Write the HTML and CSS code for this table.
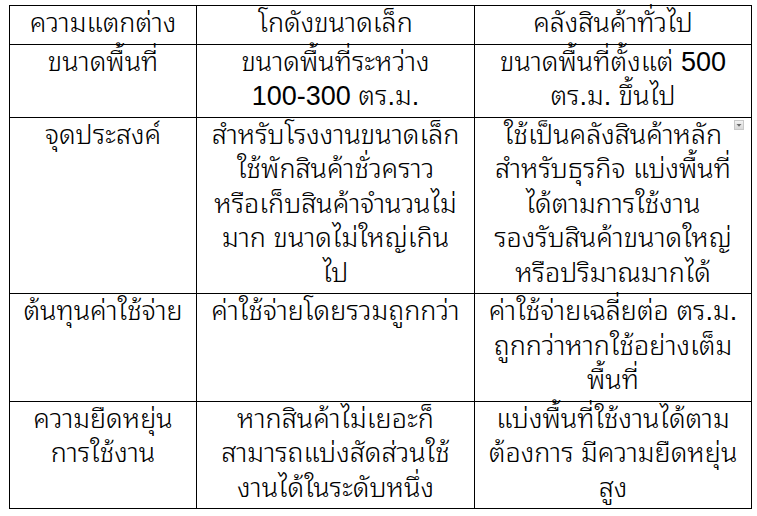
FILE: index.html
```html
<!DOCTYPE html>
<html lang="th">
<head>
<meta charset="utf-8">
<link rel="stylesheet" href="styles.css">
</head>
<body>
<table class="cmp">
  <colgroup>
    <col class="c1"><col class="c2"><col class="c3">
  </colgroup>
  <tr class="head">
    <td>ความแตกต่าง</td>
    <td>โกดังขนาดเล็ก</td>
    <td>คลังสินค้าทั่วไป</td>
  </tr>
  <tr>
    <td>ขนาดพื้นที่</td>
    <td>ขนาดพื้นที่ระหว่าง<br>100-300 ตร.ม.</td>
    <td>ขนาดพื้นที่ตั้งแต่ 500<br>ตร.ม. ขึ้นไป</td>
  </tr>
  <tr>
    <td>จุดประสงค์</td>
    <td>สำหรับโรงงานขนาดเล็ก<br>ใช้พักสินค้าชั่วคราว<br>หรือเก็บสินค้าจำนวนไม่<br>มาก ขนาดไม่ใหญ่เกิน<br>ไป</td>
    <td class="has-icon">ใช้เป็นคลังสินค้าหลัก<br>สำหรับธุรกิจ แบ่งพื้นที่<br>ได้ตามการใช้งาน<br>รองรับสินค้าขนาดใหญ่<br>หรือปริมาณมากได้<span class="dd" aria-hidden="true"><svg viewBox="0 0 10 10" width="10" height="10"><defs><linearGradient id="g" x1="0" y1="0" x2="0" y2="1"><stop offset="0" stop-color="#f4f4f4"/><stop offset="1" stop-color="#d6d6d6"/></linearGradient></defs><rect x="0.5" y="0.5" width="9" height="9" fill="url(#g)" stroke="#c8c8c8"/><path d="M2.5 4 L7.5 4 L5 6.8 Z" fill="#6a6a6a"/></svg></span></td>
  </tr>
  <tr>
    <td>ต้นทุนค่าใช้จ่าย</td>
    <td>ค่าใช้จ่ายโดยรวมถูกกว่า</td>
    <td>ค่าใช้จ่ายเฉลี่ยต่อ ตร.ม.<br>ถูกกว่าหากใช้อย่างเต็ม<br>พื้นที่</td>
  </tr>
  <tr>
    <td>ความยืดหยุ่น<br>การใช้งาน</td>
    <td>หากสินค้าไม่เยอะก็<br>สามารถแบ่งสัดส่วนใช้<br>งานได้ในระดับหนึ่ง</td>
    <td>แบ่งพื้นที่ใช้งานได้ตาม<br>ต้องการ มีความยืดหยุ่น<br>สูง</td>
  </tr>
</table>
</body>
</html>
```

FILE: styles.css
```css
html, body {
  margin: 0;
  padding: 0;
  background: #ffffff;
}
body {
  padding: 5px 0 0 9px;
  font-family: "Liberation Sans", "Noto Sans Thai Looped", "Noto Sans Thai", Tahoma, sans-serif;
  color: #000;
}
.cmp {
  border-collapse: collapse;
  table-layout: fixed;
  width: 742px;
}
.c1 { width: 187px; }
.c2 { width: 278px; }
.c3 { width: 277px; }
.cmp td {
  border: 1px solid #000;
  padding: 0 1px 3px;
  text-align: center;
  vertical-align: top;
  font-size: 27px;
  font-weight: 350;
  line-height: 34.5px;
  white-space: nowrap;
}
.has-icon {
  position: relative;
}
.dd {
  position: absolute;
  top: 2px;
  right: 7px;
  width: 10px;
  height: 10px;
  line-height: 0;
}
```
